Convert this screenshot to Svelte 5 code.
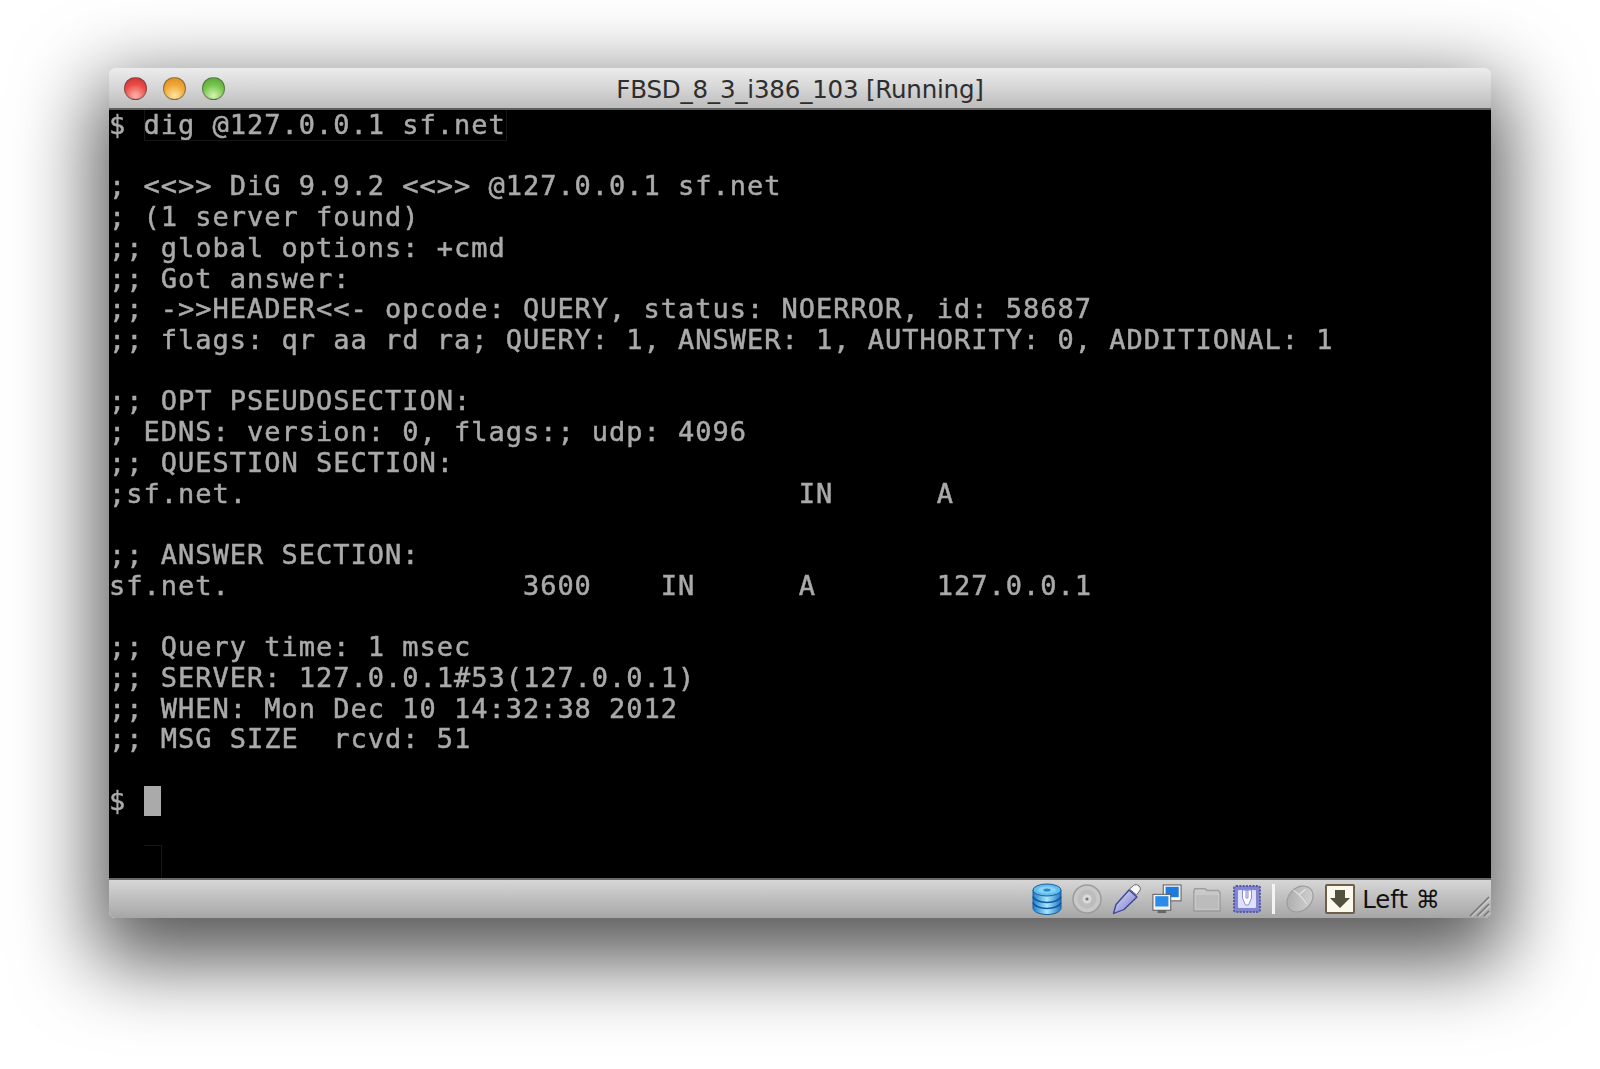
<script>
  const rows = [
    '$ dig @127.0.0.1 sf.net',
    '',
    '; <<>> DiG 9.9.2 <<>> @127.0.0.1 sf.net',
    '; (1 server found)',
    ';; global options: +cmd',
    ';; Got answer:',
    ';; ->>HEADER<<- opcode: QUERY, status: NOERROR, id: 58687',
    ';; flags: qr aa rd ra; QUERY: 1, ANSWER: 1, AUTHORITY: 0, ADDITIONAL: 1',
    '',
    ';; OPT PSEUDOSECTION:',
    '; EDNS: version: 0, flags:; udp: 4096',
    ';; QUESTION SECTION:',
    ';sf.net.                                IN      A',
    '',
    ';; ANSWER SECTION:',
    'sf.net.                 3600    IN      A       127.0.0.1',
    '',
    ';; Query time: 1 msec',
    ';; SERVER: 127.0.0.1#53(127.0.0.1)',
    ';; WHEN: Mon Dec 10 14:32:38 2012',
    ';; MSG SIZE  rcvd: 51',
    ''
  ];
</script>

<div class="page">
  <div class="window">
    <header class="titlebar">
      <div class="lights">
        <span class="light red"></span>
        <span class="light amber"></span>
        <span class="light green"></span>
      </div>
      <span class="title">FBSD_8_3_i386_103 [Running]</span>
    </header>

    <main class="screen">
      {#each rows as row}
        <div class="row">{row}</div>
      {/each}
      <div class="row">$ <span class="cursor"></span></div>
      <span class="ghost ghost-top"></span>
      <span class="ghost ghost-bottom"></span>
    </main>

    <footer class="statusbar">
      <svg class="icon" viewBox="0 0 30 32">
        <defs>
          <linearGradient id="disk" x1="0" x2="1" y1="0" y2="0">
            <stop offset="0" stop-color="#1c7fd0" />
            <stop offset="0.5" stop-color="#a8e6fb" />
            <stop offset="1" stop-color="#1a76c6" />
          </linearGradient>
          <linearGradient id="pen" x1="0" x2="1" y1="0" y2="1">
            <stop offset="0" stop-color="#e6e7fb" />
            <stop offset="1" stop-color="#6e72c8" />
          </linearGradient>
          <linearGradient id="folder" x1="0" x2="0" y1="0" y2="1">
            <stop offset="0" stop-color="#cfcfcf" />
            <stop offset="1" stop-color="#aaa" />
          </linearGradient>
          <linearGradient id="mouse" x1="1" x2="0" y1="0" y2="1">
            <stop offset="0" stop-color="#d6d6d6" />
            <stop offset="1" stop-color="#a8a8a8" />
          </linearGradient>
        </defs>
        <path d="M1 7v18c0 3.500 6 6.500 14 6.500s14-3 14-6.500V7z" fill="url(#disk)" stroke="#1b5f9c" />
        <ellipse cx="15" cy="7" rx="14" ry="6" fill="#62bcec" stroke="#1b5f9c" />
        <ellipse cx="15" cy="7" rx="9" ry="3.600" fill="#86d2f4" />
        <ellipse cx="15" cy="7" rx="3.500" ry="1.500" fill="#2a86cc" />
        <path d="M1 13.500c1 3.500 7 6 14 6s13-2.500 14-6M1 19.500c1 3.500 7 6 14 6s13-2.500 14-6" fill="none" stroke="#135a9a" stroke-width="1.600" />
      </svg>

      <svg class="icon" viewBox="0 0 30 32">
        <circle cx="15" cy="16" r="14" fill="#c8c8c8" stroke="#9c9c9c" stroke-width="1.500" />
        <circle cx="15" cy="16" r="9.500" fill="#bdbdbd" />
        <circle cx="15" cy="16" r="4.500" fill="#dadada" />
        <circle cx="15" cy="16" r="1.600" fill="#777" />
      </svg>

      <svg class="icon" viewBox="0 0 30 32">
        <path d="M1.500 30.500l2.500-9L17 7l8 7-13 12.500z" fill="url(#pen)" stroke="#3c4296" stroke-width="1.300" stroke-linejoin="round" />
        <path d="M17.500 6l4-3.500c1.500-1.300 4-1 5.500.5s2 3.500.5 5l-3 4z" fill="#f6f6f6" stroke="#666" />
      </svg>

      <svg class="icon" viewBox="0 0 32 32">
        <rect x="12" y="1" width="19" height="17" fill="#f3f3f3" stroke="#555" />
        <rect x="14.500" y="3" width="14" height="11" fill="#1f7be0" />
        <rect x="1" y="11" width="19" height="17" fill="#f3f3f3" stroke="#555" />
        <rect x="3.500" y="13" width="14" height="11" fill="#2a8ce8" />
        <rect x="6" y="28" width="9" height="3" fill="#666" />
      </svg>

      <svg class="icon" viewBox="0 0 32 32">
        <path d="M2 8l1-3h11l2 2h12l2 2v20H2z" fill="url(#folder)" stroke="#9e9e9e" stroke-width="1.500" />
        <rect x="3.500" y="11" width="25" height="16" fill="#bcbcbc" stroke="#cdcdcd" />
      </svg>

      <svg class="icon" viewBox="0 0 30 32">
        <rect x="2" y="3" width="26" height="26" rx="2" fill="#8184cf" stroke="#5459ac" stroke-dasharray="2 1.300" stroke-width="2" />
        <rect x="6" y="7" width="18" height="18" rx="1" fill="#dfe0fb" />
        <path d="M10.500 7h9v8l-3 7h-3l-3-7zM14 7v8h2V7z" fill="#fff" fill-rule="evenodd" stroke="#8b8ed8" />
      </svg>

      <span class="divider"></span>

      <svg class="icon" viewBox="0 0 32 32">
        <ellipse cx="16" cy="16" rx="12" ry="15.500" transform="rotate(45 16 16)" fill="url(#mouse)" stroke="#9b9b9b" stroke-width="1.200" />
        <path d="M9 6.500c3.500 2.500 6 4.500 8.500 7.500s3.500 4 5.500 7M15 11.500L22 5.500" fill="none" stroke="#e6e6e6" stroke-width="1.200" />
      </svg>

      <svg class="key" viewBox="0 0 30 30">
        <rect x="1" y="1" width="28" height="28" rx="1" fill="#fbf8ee" stroke="#6e6048" stroke-width="2" />
        <path d="M10 6h10v8h5L15 24 5 14h5z" fill="#54503f" />
      </svg>

      <span class="capture">Left ⌘</span>

      <svg class="grip" viewBox="0 0 22 22">
        <path d="M2 21L21 2M9 21L21 9M16 21l5-5" stroke="#777" stroke-width="1.500" />
        <path d="M3 21L21 3M10 21L21 10M17 21l4-4" stroke="#e6e6e6" stroke-width="0.800" transform="translate(1 0.500)" />
      </svg>
    </footer>
  </div>
</div>

<style>
  :global(body) {
    margin: 0;
    background: #fff;
  }

  .page {
    height: 1069px;
    box-sizing: border-box;
    padding: 68px 109px 0 109px;
    overflow: hidden;
  }

  .window {
    position: relative;
    border-radius: 8px 8px 6px 6px;
    box-shadow: 0 30px 80px 14px rgba(0, 0, 0, 0.66);
  }

  .titlebar {
    position: relative;
    height: 40px;
    display: flex;
    align-items: center;
    justify-content: center;
    background: linear-gradient(#ececec, #d8d8d8 45%, #bcbcbc);
    border-radius: 8px 8px 0 0;
    border-bottom: 2px solid #5e5e5e;
  }

  .lights {
    position: absolute;
    left: 15px;
    top: 9px;
    display: flex;
    gap: 16px;
  }

  .light {
    width: 23px;
    height: 23px;
    border-radius: 50%;
    box-sizing: border-box;
    border: 1px solid rgba(70, 70, 70, 0.55);
  }

  .red {
    background: radial-gradient(circle at 50% 85%, #ffb4ac, #ea4d48 55%, #c92c2c);
  }

  .amber {
    background: radial-gradient(circle at 50% 85%, #ffe6a0, #f0a634 55%, #d08a1c);
  }

  .green {
    background: radial-gradient(circle at 50% 85%, #d4f5b0, #76c34c 55%, #4f9f30);
  }

  .title {
    font-family: "DejaVu Sans", sans-serif;
    font-size: 24.5px;
    color: #2e2e2e;
    letter-spacing: -0.2px;
    padding-top: 2px;
  }

  .screen {
    position: relative;
    background: #000;
    height: 768px;
    font-family: "DejaVu Sans Mono", monospace;
    font-size: 27px;
    font-weight: 400;
    letter-spacing: 0.99px;
    color: #aaa;
    line-height: 30.72px;
    -webkit-text-stroke: 0.5px #aaa;
    filter: blur(0.45px);
    overflow: hidden;
  }

  .row {
    height: 30.72px;
    white-space: pre;
  }

  .cursor {
    display: inline-block;
    width: 17px;
    height: 30px;
    background: #aaa;
    vertical-align: -6px;
  }

  .ghost {
    position: absolute;
    border: 1px solid #161616;
  }

  .ghost-top {
    left: 35px;
    top: 0;
    width: 361px;
    height: 30px;
    border-top: 0;
  }

  .ghost-bottom {
    left: 35px;
    top: 735px;
    width: 17px;
    height: 40px;
    border-left: 0;
    border-bottom: 0;
  }

  .statusbar {
    height: 38px;
    display: flex;
    align-items: center;
    justify-content: flex-end;
    gap: 10px;
    padding: 0 4px 0 0;
    background: linear-gradient(#d6d6d6, #a6a6a6);
    border-top: 2px solid #6a6a6a;
    border-radius: 0 0 6px 6px;
    position: relative;
  }

  .icon {
    width: 30px;
    height: 32px;
    flex: none;
  }

  .divider {
    width: 3px;
    height: 30px;
    background: #f4f4f4;
    flex: none;
  }

  .key {
    width: 30px;
    height: 30px;
    flex: none;
  }

  .capture {
    font-family: "DejaVu Sans", sans-serif;
    font-size: 24.3px;
    color: #111;
    margin: 0 47px 0 -3px;
    white-space: pre;
  }

  .grip {
    position: absolute;
    right: 1px;
    bottom: 1px;
    width: 22px;
    height: 22px;
  }
</style>
